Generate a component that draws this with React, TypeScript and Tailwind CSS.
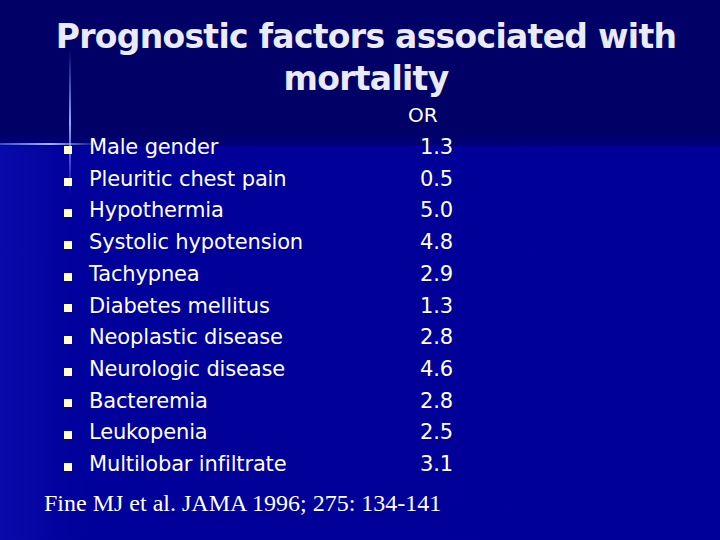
import React from "react";

const rows: [string, string][] = [
  ["Male gender", "1.3"],
  ["Pleuritic chest pain", "0.5"],
  ["Hypothermia", "5.0"],
  ["Systolic hypotension", "4.8"],
  ["Tachypnea", "2.9"],
  ["Diabetes mellitus", "1.3"],
  ["Neoplastic disease", "2.8"],
  ["Neurologic disease", "4.6"],
  ["Bacteremia", "2.8"],
  ["Leukopenia", "2.5"],
  ["Multilobar infiltrate", "3.1"],
];

export default function App() {
  return (
    <div className="relative w-[720px] h-[540px] overflow-hidden bg-[#000099]" style={{ fontFamily: '"DejaVu Sans", sans-serif' }}>
      {/* background layers */}
      <div className="absolute inset-0 bg-gradient-to-r from-[#0a0aaa] from-[0%] via-[#00009a] via-[12%] to-[#000099]" />
      <div className="absolute left-0 top-0 w-[720px] h-[146px] bg-gradient-to-b from-[#000066] from-[90%] to-[#00007a]" />
      {/* sparkle lines */}
      <div className="absolute left-[69px] top-[50px] w-[2px] h-[145px] bg-gradient-to-b from-transparent via-[#8fa8ff] to-transparent" />
      <div className="absolute left-0 top-[143px] w-[100px] h-[2px] bg-gradient-to-r from-[#3050d0] via-[#a0b8ff] to-transparent" />

      <div className="relative flex flex-col">
        <div className="pt-[16px] pl-[12px] text-center text-[#ebebf7] font-bold text-[33px] leading-[42px] tracking-[-0.7px]">
          <div>Prognostic factors associated with</div>
          <div>mortality</div>
        </div>
        <div className="pl-[408px] pt-[3px] text-white text-[20px] leading-[24px]">OR</div>
        <div className="flex flex-col pt-[5px]">
          {rows.map(([label, v]) => (
            <div key={label} className="flex items-center h-[31.7px] text-white text-[21px] tracking-[-0.15px]">
              <div className="w-[64px]" />
              <div className="w-[8px] h-[8px] bg-[#ffffcc] mt-[4px]" />
              <div className="w-[17px]" />
              <div className="w-[331px]">{label}</div>
              <div>{v}</div>
            </div>
          ))}
        </div>
        <div className="pl-[44px] pt-[4px] text-white text-[24px]" style={{ fontFamily: '"Liberation Serif", serif' }}>
          Fine MJ et al. JAMA 1996; 275: 134-141
        </div>
      </div>
    </div>
  );
}
